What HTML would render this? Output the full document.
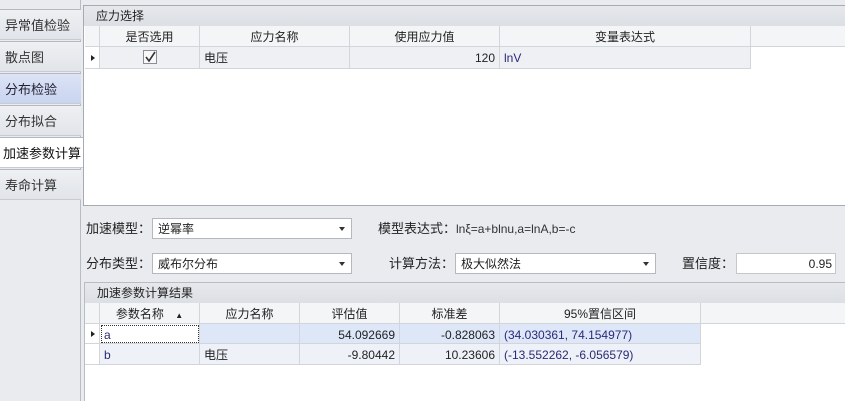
<!DOCTYPE html>
<html><head><meta charset="utf-8"><style>
*{margin:0;padding:0;box-sizing:border-box}
body{width:845px;height:401px;overflow:hidden;background:#e9ebef;font-family:"Liberation Sans","Noto Sans CJK SC",sans-serif;font-size:12px;color:#222;position:relative;line-height:14px}
.a{position:absolute}
.tab{position:absolute;left:0;width:81px;height:31px;border-top:1px solid #b4b8c0;border-bottom:1px solid #c8ccd2;background:linear-gradient(#eef0f3,#e1e4e9);padding:8px 0 0 5px;font-size:13px;line-height:15px;color:#333}
.cell{position:absolute;border-right:1px solid #d2d5da;border-bottom:1px solid #d2d5da;padding:4px 4px 0;white-space:nowrap;overflow:hidden}
.hd{background:#f4f5f7;text-align:center;color:#222}
.gh{position:absolute;background:linear-gradient(#e6e8ec,#dcdfe4);font-size:12px;padding:3px 0 0 12px}
.combo{position:absolute;height:21px;background:#fff;border:1px solid #b4b8bf;padding:3px 5px;font-size:12px}
.dd:after{content:"";position:absolute;right:6px;top:8px;border-left:3.5px solid transparent;border-right:3.5px solid transparent;border-top:4px solid #333}
.lbl{position:absolute;font-size:12px}
.blue{color:#2a2a78}
</style></head><body>
<div class="a" style="left:80px;top:0;width:1px;height:401px;background:#b8bcc4"></div>
<div class="tab" style="top:9px">异常值检验</div>
<div class="tab" style="top:41px">散点图</div>
<div class="tab" style="top:73px;background:linear-gradient(#dce3f5,#c9d4f0);color:#223">分布检验</div>
<div class="tab" style="top:105px">分布拟合</div>
<div class="tab" style="top:137px;width:84px;background:#fff;padding-left:3px;color:#111">加速参数计算</div>
<div class="tab" style="top:169px">寿命计算</div>

<div class="a" style="left:83px;top:5px;width:762px;height:201px;border:1px solid #a6aab2;border-right:none;background:#fff"></div>
<div class="gh" style="left:84px;top:6px;width:761px;height:20px">应力选择</div>
<div class="cell hd" style="left:85px;top:26px;width:15px;height:21px"></div>
<div class="cell hd" style="left:100px;top:26px;width:100px;height:21px">是否选用</div>
<div class="cell hd" style="left:200px;top:26px;width:150px;height:21px">应力名称</div>
<div class="cell hd" style="left:350px;top:26px;width:150px;height:21px">使用应力值</div>
<div class="cell hd" style="left:500px;top:26px;width:251px;height:21px">变量表达式</div>
<div class="cell hd" style="left:751px;top:26px;width:94px;height:21px;border-right:none"></div>
<div class="cell" style="left:85px;top:47px;width:15px;height:22px;background:#fff;padding:0"><div class="a" style="left:6px;top:8px;border-top:3px solid transparent;border-bottom:3px solid transparent;border-left:4px solid #222"></div></div>
<div class="cell" style="left:100px;top:47px;width:100px;height:22px;background:#eef0f3"><svg class="a" style="left:43px;top:3px" width="14" height="14"><rect x="0.5" y="0.5" width="13" height="13" fill="#f8f8f8" stroke="#8a8e96"/><path d="M3 7 L6 11 L12 2" stroke="#333" stroke-width="1.6" fill="none"/></svg></div>
<div class="cell" style="left:200px;top:47px;width:150px;height:22px;background:#eef0f3">电压</div>
<div class="cell" style="left:350px;top:47px;width:150px;height:22px;background:#eef0f3;text-align:right">120</div>
<div class="cell blue" style="left:500px;top:47px;width:251px;height:22px;background:#eef0f3">lnV</div>

<div class="lbl" style="left:86px;top:222px;font-size:13px">加速模型：</div>
<div class="combo dd" style="left:152px;top:218px;width:200px">逆幂率</div>
<div class="lbl" style="left:378px;top:222px;font-size:13px">模型表达式：</div>
<div class="lbl" style="left:456px;top:222px;color:#333">lnξ=a+blnu,a=lnA,b=-c</div>
<div class="lbl" style="left:86px;top:257px;font-size:13px">分布类型：</div>
<div class="combo dd" style="left:152px;top:253px;width:200px">威布尔分布</div>
<div class="lbl" style="left:389px;top:257px;font-size:13px">计算方法：</div>
<div class="combo dd" style="left:455px;top:253px;width:201px">极大似然法</div>
<div class="lbl" style="left:682px;top:257px;font-size:13px">置信度：</div>
<div class="combo" style="left:736px;top:253px;width:100px;text-align:right;padding-right:3px;border-color:#c4c7cc">0.95</div>

<div class="a" style="left:84px;top:282px;width:761px;height:119px;border:1px solid #b8bcc4;border-right:none;border-bottom:none;background:#fff"></div>
<div class="gh" style="left:85px;top:283px;width:760px;height:20px">加速参数计算结果</div>
<div class="cell hd" style="left:85px;top:303px;width:15px;height:21px"></div>
<div class="cell hd" style="left:100px;top:303px;width:100px;height:21px">参数名称 <span style="font-size:8px;margin-left:8px">▲</span></div>
<div class="cell hd" style="left:200px;top:303px;width:100px;height:21px">应力名称</div>
<div class="cell hd" style="left:300px;top:303px;width:100px;height:21px">评估值</div>
<div class="cell hd" style="left:400px;top:303px;width:100px;height:21px">标准差</div>
<div class="cell hd" style="left:500px;top:303px;width:201px;height:21px">95%置信区间</div>
<div class="cell hd" style="left:701px;top:303px;width:144px;height:21px;border-right:none"></div>
<div class="cell" style="left:85px;top:324px;width:15px;height:20px;background:#fff;padding:0"><div class="a" style="left:6px;top:7px;border-top:3px solid transparent;border-bottom:3px solid transparent;border-left:4px solid #222"></div></div>
<div class="cell blue" style="left:100px;top:324px;width:100px;height:20px;background:#fff;outline:1px dotted #333;outline-offset:-2px;padding-left:4px">a</div>
<div class="cell" style="left:200px;top:324px;width:100px;height:20px;background:#dde7f8"></div>
<div class="cell" style="left:300px;top:324px;width:100px;height:20px;background:#dde7f8;text-align:right">54.092669</div>
<div class="cell" style="left:400px;top:324px;width:100px;height:20px;background:#dde7f8;text-align:right">-0.828063</div>
<div class="cell blue" style="left:500px;top:324px;width:201px;height:20px;background:#dde7f8">(34.030361, 74.154977)</div>
<div class="cell" style="left:85px;top:344px;width:15px;height:21px;background:#fff"></div>
<div class="cell blue" style="left:100px;top:344px;width:100px;height:21px;background:#eef1f7">b</div>
<div class="cell" style="left:200px;top:344px;width:100px;height:21px;background:#eef1f7">电压</div>
<div class="cell" style="left:300px;top:344px;width:100px;height:21px;background:#eef1f7;text-align:right">-9.80442</div>
<div class="cell" style="left:400px;top:344px;width:100px;height:21px;background:#eef1f7;text-align:right">10.23606</div>
<div class="cell blue" style="left:500px;top:344px;width:201px;height:21px;background:#eef1f7">(-13.552262, -6.056579)</div>
</body></html>
